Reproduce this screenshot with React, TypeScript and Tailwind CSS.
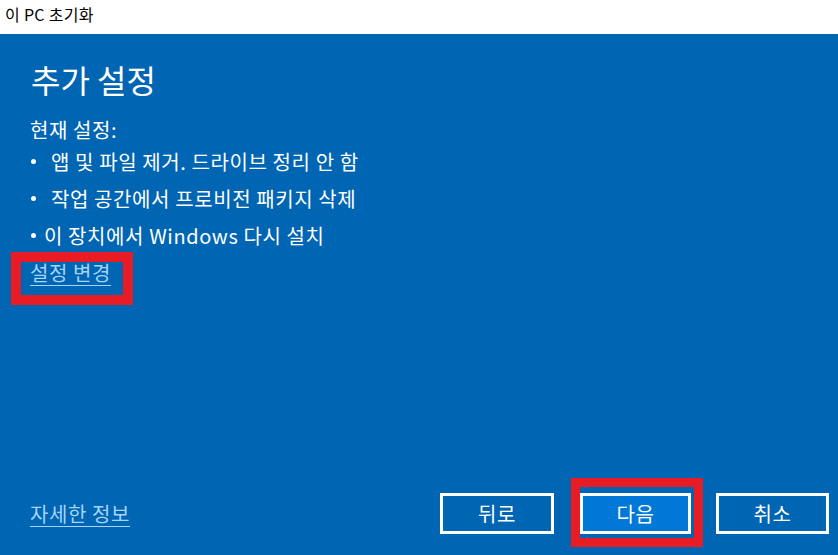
import React from "react";

const bullets = [
  { text: "앱 및 파일 제거. 드라이브 정리 안 함", gap: "w-[15px]" },
  { text: "작업 공간에서 프로비전 패키지 삭제", gap: "w-[15px]" },
  { text: "이 장치에서 Windows 다시 설치", gap: "w-[8px]" },
];

const App: React.FC = () => {
  return (
    <div className="w-[838px] h-[555px] flex flex-col overflow-hidden font-['Noto_Sans_CJK_KR','Noto_Sans',sans-serif]">
      {/* title bar */}
      <div className="h-[34px] shrink-0 bg-white pl-[5px] text-[16px] tracking-[0.3px] leading-[28px] text-black">
        이 PC 초기화
      </div>

      {/* dialog body */}
      <div className="flex-1 flex flex-col bg-[#0065b3] text-white pl-[30px] pr-[9px] pb-[21px]">
        <h1 className="mt-[25px] ml-[1px] text-[32px] leading-[40px] font-normal">추가 설정</h1>

        <div className="mt-[18px] text-[20px] tracking-[0.6px] leading-[26px]">현재 설정:</div>
        <ul className="text-[20px] tracking-[0.6px] leading-[37px]">
          {bullets.map((b) => (
            <li key={b.text} className="flex items-center">
              <span className="w-[5px] h-[5px] rounded-full bg-white ml-[1px] shrink-0" />
              <span className={b.gap} />
              <span>{b.text}</span>
            </li>
          ))}
        </ul>

        <div className="mt-[4px] self-start relative">
          <a
            href="#"
            className="block text-[20px] tracking-[0.6px] leading-[30px] text-[#a6d4fa] underline decoration-1 underline-offset-[4px]"
          >
            설정 변경
          </a>
          <div className="absolute -left-[19px] -right-[22px] -top-[6px] -bottom-[17px] border-[10px] border-[#e81c24]" />
        </div>

        <div className="flex-1" />

        {/* footer */}
        <div className="flex items-center">
          <a
            href="#"
            className="text-[20px] tracking-[0.6px] leading-[30px] text-[#a6d4fa] underline decoration-1 underline-offset-[4px]"
          >
            자세한 정보
          </a>
          <div className="flex-1" />
          <button className="w-[114px] h-[41px] border-[3px] border-white text-[20px] tracking-[0.6px] text-white flex items-center justify-center">
            뒤로
          </button>
          <div className="relative ml-[26px]">
            <button className="w-[111px] h-[41px] border-[3px] border-white bg-[#0078d7] text-[20px] tracking-[0.6px] text-white flex items-center justify-center">
              다음
            </button>
            <div className="absolute -left-[9px] -right-[12px] -top-[15px] -bottom-[13px] border-[9px] border-[#e81c24]" />
          </div>
          <button className="ml-[25px] w-[113px] h-[41px] border-[3px] border-white text-[20px] tracking-[0.6px] text-white flex items-center justify-center">
            취소
          </button>
        </div>
      </div>
    </div>
  );
};

export default App;
